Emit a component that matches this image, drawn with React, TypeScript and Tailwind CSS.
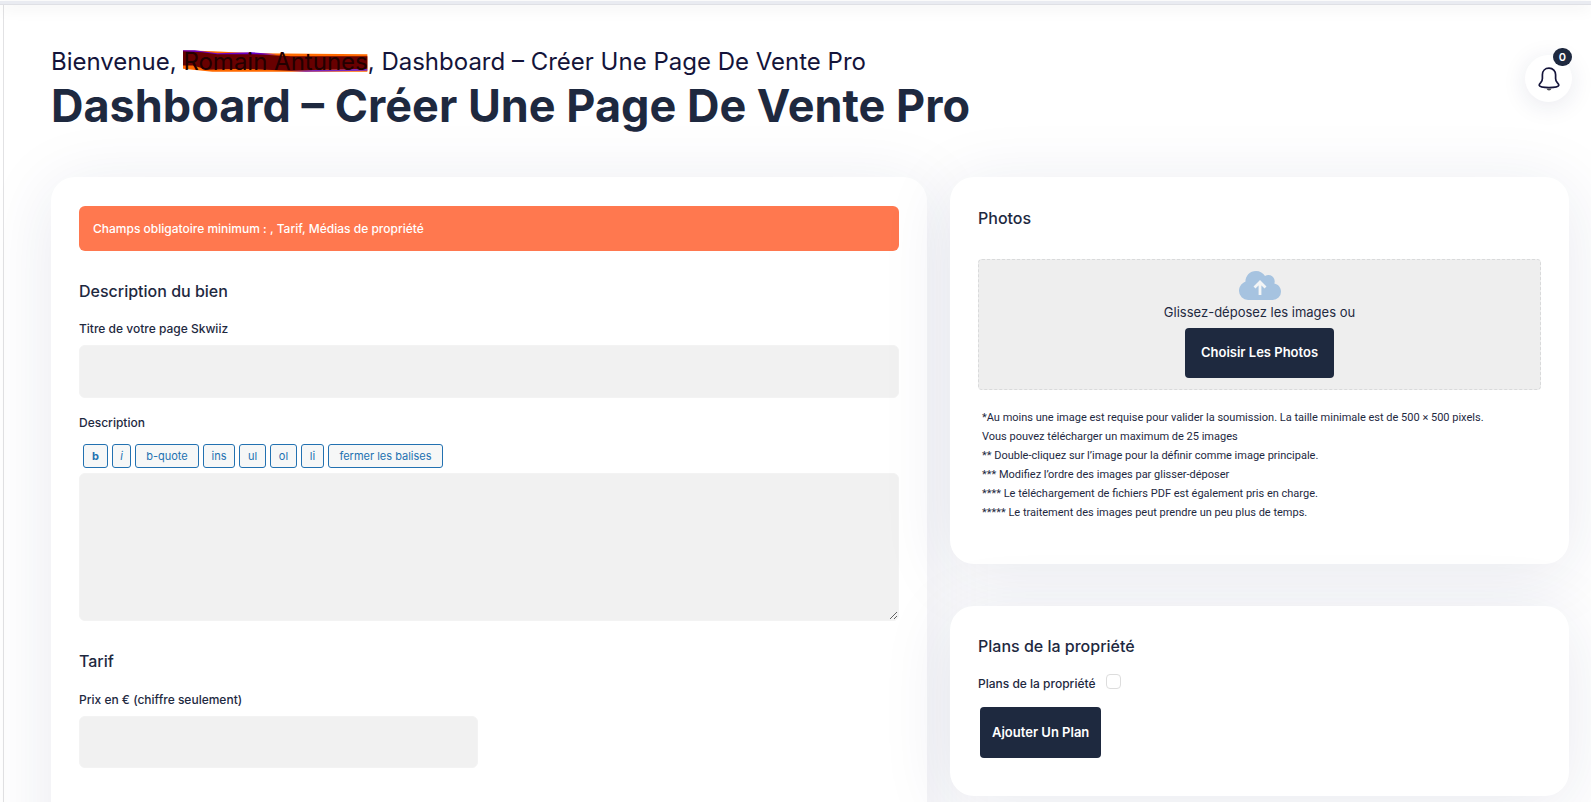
import React, { useState } from 'react';

const quickTags = [
  { label: 'b', className: 'w-[25px] font-bold' },
  { label: 'i', className: 'w-[19px] italic' },
  { label: 'b-quote', className: 'w-16' },
  { label: 'ins', className: 'w-8' },
  { label: 'ul', className: 'w-[27px]' },
  { label: 'ol', className: 'w-[27px]' },
  { label: 'li', className: 'w-[23px]' },
  { label: 'fermer les balises', className: 'w-[115px]' },
];

const photoNotes = [
  '*Au moins une image est requise pour valider la soumission. La taille minimale est de 500 × 500 pixels.',
  'Vous pouvez télécharger un maximum de 25 images',
  "** Double-cliquez sur l’image pour la définir comme image principale.",
  "*** Modifiez l’ordre des images par glisser-déposer",
  '**** Le téléchargement de fichiers PDF est également pris en charge.',
  '***** Le traitement des images peut prendre un peu plus de temps.',
];

const BellIcon = () => (
  <svg width="22" height="24" viewBox="0 0 22 24" fill="none" aria-hidden="true">
    <path
      d="M11 1.2C7 1.2 4.4 4 4.4 7.8v3.6c0 1.9-.6 3-1.7 4.2C1.500 16.800 1 17.500 1.200 18.300 1.600 19.900 5.800 20.600 11 20.600s9.400-.7 9.800-2.300c.2-.8-.3-1.500-1.500-2.700-1.100-1.200-1.700-2.300-1.700-4.200V7.800C17.600 4 15 1.200 11 1.200Z"
      stroke="#14143a"
      strokeWidth="1.700"
      strokeLinejoin="round"
    />
    <path d="M8.500 21.500h5c-.4 1.200-1.300 1.900-2.500 1.900s-2.100-.7-2.500-1.900Z" fill="#4a4a52" />
  </svg>
);

const CloudUploadIcon = () => (
  <svg width="42" height="29" viewBox="0 0 42 29" aria-hidden="true">
    <path
      d="M9 29a9 9 0 0 1-9-9c0-4.400 2.700-7.800 6.400-9.200C6.400 4.600 11 0 17 0c3.900 0 7.200 2 9 5 1-.7 2.200-1 3.400-1 3.600 0 6.300 2.800 6.300 6.300 0 .8-.1 1.600-.4 2.300C39.200 13.400 42 16.600 42 20.700a8.300 8.300 0 0 1-8.300 8.300Z"
      fill="#a6c3e0"
    />
    <path d="M21 24V12M15.500 16.500 21 11l5.500 5.500" fill="none" stroke="#f3f5f6" strokeWidth="2.800" />
  </svg>
);

// Marker stroke hiding the user's name
const MarkerStroke = () => (
  <svg
    className="absolute left-0 top-0 -z-10 h-full w-full"
    viewBox="0 0 188 33"
    preserveAspectRatio="none"
    aria-hidden="true"
  >
    <path d="M0 5 30 6 75 8 188 9V26L110 26 30 26 0 23Z" fill="#ff6a00" />
    <path d="M0 5 12 5 35 8 70 7 95 9 60 11 20 10 0 8Z" fill="#6a00c8" />
    <path d="M105 25 188 23V25L125 26Z" fill="#7a28c0" />
    <path d="M0 6 20 7 35 9 75 9 110 11 188 11V23L140 24 110 25 60 23 25 24 10 20 0 20Z" fill="#680000" />
  </svg>
);

const Card: React.FC<{ children: React.ReactNode; className?: string }> = ({ children, className = '' }) => (
  <section className={`rounded-3xl bg-white px-7 shadow-[0_10px_70px_rgba(32,42,100,0.10)] ${className}`}>
    {children}
  </section>
);

const fieldClass = 'w-full rounded-md border border-[#f3f3f3] bg-[#f1f1f1] px-3 outline-none focus:border-[#1e293f]';

export default function App() {
  const [title, setTitle] = useState('');
  const [description, setDescription] = useState('');
  const [price, setPrice] = useState('');
  const [hasPlans, setHasPlans] = useState(false);

  return (
    <div className="flex h-screen flex-col overflow-hidden bg-white pt-px font-['Inter',sans-serif] text-[#1e293f]">
      <div className="z-10 h-1 shrink-0 border-b border-[#dfe0e5] bg-[#e9ebf1] shadow-[0_2px_16px_rgba(0,0,0,0.12)]" />

      <div className="ml-[3px] min-h-0 grow border-l border-[#e2e2e4] pl-[47px]">
        <header className="flex items-start justify-between pr-[19px] pt-10">
          <div>
            <p className="text-2xl leading-[34px] text-[#14143a]">
              Bienvenue,{' '}
              <span className="relative isolate inline-block text-[#220000]">
                <MarkerStroke />
                Romain Antunes
              </span>
              , Dashboard – Créer Une Page De Vente Pro
            </p>
            <h1 className="text-[45px] font-bold leading-[53px]">Dashboard – Créer Une Page De Vente Pro</h1>
          </div>
          <button
            type="button"
            aria-label="Notifications"
            className="relative mt-[10px] flex size-[47px] items-center justify-center rounded-full bg-white shadow-[0_4px_24px_rgba(32,42,84,0.10)]"
          >
            <BellIcon />
            <span className="absolute -top-[7px] right-0 flex h-[18px] w-[19px] items-center justify-center rounded-full bg-[#1e293f] text-[11px] font-semibold text-white">
              0
            </span>
          </button>
        </header>

        <main className="mt-[45px] grid grid-cols-[876fr_619fr] items-start gap-[23px] pr-[22px]">
          <Card className="min-h-[700px] pt-[29px]">
            <div role="alert" className="rounded-md bg-[#ff784f] px-[14px] py-3 text-[12px] font-medium leading-[21px] text-white">
              Champs obligatoire minimum : , Tarif, Médias de propriété
            </div>

            <h2 className="mt-7 text-base font-medium leading-6">Description du bien</h2>
            <label htmlFor="title" className="mt-[17px] block text-xs font-medium leading-[18px]">
              Titre de votre page Skwiiz
            </label>
            <input
              id="title"
              type="text"
              value={title}
              onChange={(e) => setTitle(e.target.value)}
              className={`mt-[7px] h-[53px] ${fieldClass}`}
            />

            <label htmlFor="description" className="mt-4 block text-xs font-medium leading-[18px]">
              Description
            </label>
            <div className="mt-3 flex gap-1 pl-1">
              {quickTags.map((tag) => (
                <button
                  key={tag.label}
                  type="button"
                  className={`h-6 whitespace-nowrap rounded-[3px] border border-[#2271b1] bg-[#f6f7f7] text-center text-[11px] text-[#2271b1] ${tag.className}`}
                >
                  {tag.label}
                </button>
              ))}
            </div>
            <textarea
              id="description"
              value={description}
              onChange={(e) => setDescription(e.target.value)}
              className={`mt-[5px] block h-[148px] resize-y py-2 ${fieldClass}`}
            />

            <h2 className="mt-7 text-base font-medium leading-6">Tarif</h2>
            <div className="mt-[18px] grid grid-cols-2 gap-[22px]">
              <div>
                <label htmlFor="price" className="block text-xs font-medium leading-[18px]">
                  Prix en € (chiffre seulement)
                </label>
                <input
                  id="price"
                  type="text"
                  value={price}
                  onChange={(e) => setPrice(e.target.value)}
                  className={`mt-[7px] h-[52px] ${fieldClass}`}
                />
              </div>
            </div>
          </Card>

          <div className="flex flex-col gap-[42px]">
            <Card className="pb-[42px] pt-[29px]">
              <h2 className="text-base font-medium leading-6">Photos</h2>
              <div className="mt-[29px] flex flex-col items-center rounded border border-dashed border-[#d9dadb] bg-[#eeeeee] pb-[11px] pt-[11px]">
                <CloudUploadIcon />
                <p className="mt-[2px] text-[13px] leading-5">Glissez-déposez les images ou</p>
                <button
                  type="button"
                  className="mt-[6px] h-[50px] rounded bg-[#1e293f] px-4 text-[13px] font-semibold text-white"
                >
                  Choisir Les Photos
                </button>
              </div>
              <ul className="mt-[18px] pl-1 font-['Roboto',sans-serif] text-[11px] leading-[19px]">
                {photoNotes.map((note) => (
                  <li key={note}>{note}</li>
                ))}
              </ul>
            </Card>

            <Card className="pb-[38px] pt-7">
              <h2 className="text-base font-medium leading-6">Plans de la propriété</h2>
              <div className="mt-4 flex items-start gap-[10px]">
                <label htmlFor="plans" className="pt-[1px] text-xs font-medium leading-[18px]">
                  Plans de la propriété
                </label>
                <input
                  id="plans"
                  type="checkbox"
                  checked={hasPlans}
                  onChange={(e) => setHasPlans(e.target.checked)}
                  className="size-[15px] appearance-none rounded border border-[#dddddd] bg-white checked:bg-[#1e293f]"
                />
              </div>
              <button
                type="button"
                className="ml-[2px] mt-[14px] h-[51px] rounded bg-[#1e293f] px-3 text-[13px] font-semibold text-white"
              >
                Ajouter Un Plan
              </button>
            </Card>
          </div>
        </main>
      </div>
    </div>
  );
}
